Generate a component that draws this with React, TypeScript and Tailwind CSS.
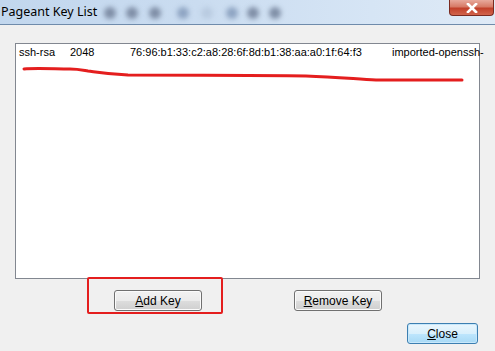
import { ReactNode } from 'react';

const blobs = [110, 132, 155, 183, 207, 232, 253, 275];

function WinButton({
  children,
  focused = false,
  className = '',
}: {
  children: ReactNode;
  focused?: boolean;
  className?: string;
}) {
  return (
    <button
      className={
        'flex h-[21px] items-center justify-center rounded-[3px] border text-[12px] text-black ' +
        (focused
          ? 'border-[#3c7fb1] bg-[linear-gradient(#eaf6fd_0%,#d9f0fc_50%,#bee6fd_51%,#a7d9f5_100%)] shadow-[inset_0_0_0_1px_#c8e8fb] '
          : 'border-[#707070] bg-[linear-gradient(#f2f2f2_0%,#ebebeb_50%,#dddddd_51%,#cfcfcf_100%)] shadow-[inset_0_0_0_1px_#fbfbfb] ') +
        className
      }
    >
      {children}
    </button>
  );
}

export default function App() {
  return (
    <div
      className="flex h-[351px] w-[495px] flex-col overflow-hidden bg-[#f0f0f0]"
      style={{ fontFamily: '"Liberation Sans", Arial, sans-serif' }}
    >
      {/* title bar */}
      <div className="relative flex h-[25px] shrink-0 items-center border-b border-[#6f8bab] bg-[linear-gradient(90deg,#c2d7ee_0%,#cadcf0_40%,#d6e5f5_75%,#dfeaf6_100%)]">
        <span className="pl-[1px] text-[12.5px] text-black" style={{ fontFamily: '"Noto Sans", "Liberation Sans", sans-serif' }}>
          Pageant Key List
        </span>
        {blobs.map((x, i) => (
          <span
            key={x}
            className={
              'absolute top-[7px] h-[12px] w-[12px] rounded-full blur-[2.5px] ' +
              (i === 4 ? 'bg-[#b9cbe0]' : i === 3 || i === 5 ? 'bg-[#8ea4c2]' : 'bg-[#7f8ea6]')
            }
            style={{ left: x - 6 }}
          />
        ))}
        <div className="absolute right-[1px] top-0 flex h-[16px] w-[45px] items-center justify-center rounded-b-[4px] border border-t-0 border-[#7a2a20] bg-[linear-gradient(#e8a99c_0%,#d77a66_45%,#c2402a_55%,#d1644c_100%)]">
          <svg width="12" height="10" viewBox="0 0 12 10">
            <path d="M2 1L10 9M10 1L2 9" stroke="#ffffff" strokeWidth="2.6" strokeLinecap="square" />
          </svg>
        </div>
      </div>

      {/* client */}
      <div className="flex flex-1 flex-col px-[15px] pt-[18px]">
        <div className="relative h-[236px] w-[465px] border border-[#828790] bg-white">
          <div className="flex h-[16px] items-center text-[11px] text-black">
            <span className="w-[51px] shrink-0 pl-[3px]">ssh-rsa</span>
            <span className="w-[60px] shrink-0 pl-[3px]">2048</span>
            <span className="w-[262px] shrink-0 pl-[3px]">76:96:b1:33:c2:a8:28:6f:8d:b1:38:aa:a0:1f:64:f3</span>
            <span className="shrink-0 whitespace-nowrap pl-[3px]">imported-openssh-</span>
          </div>
          <svg className="absolute left-0 top-0" width="465" height="60">
            <path
              d="M8 25 C20 24 40 25 54 25 C62 25 66 26 72 27 C80 28 90 30 112 31 C170 31 220 31 290 32 C320 33 340 35 360 36 L446 36"
              fill="none"
              stroke="#e41e1e"
              strokeWidth="3"
              strokeLinecap="round"
            />
          </svg>
        </div>

        <div className="relative mt-[11px] flex">
          <WinButton className="ml-[99px] w-[88px]">
            <span>
              <u>A</u>dd Key
            </span>
          </WinButton>
          <WinButton className="ml-[92px] w-[88px]">
            <span>
              <u>R</u>emove Key
            </span>
          </WinButton>
          <div className="pointer-events-none absolute left-[72px] top-[-13px] h-[37px] w-[136px] rounded-[2px] border-2 border-[#e41e1e]" />
        </div>

        <div className="mt-[12px] flex justify-end pr-[2px]">
          <WinButton focused className="h-[20px] w-[71px]">
            <span>
              <u>C</u>lose
            </span>
          </WinButton>
        </div>
      </div>
    </div>
  );
}
